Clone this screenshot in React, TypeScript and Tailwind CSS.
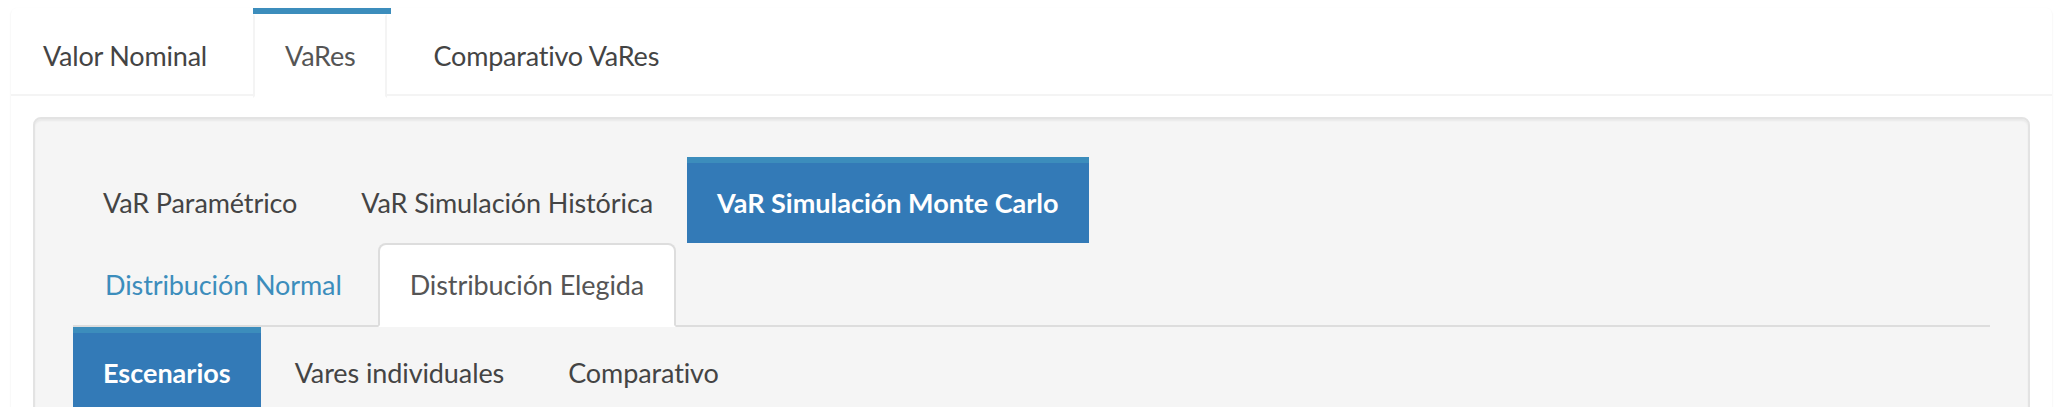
import { useState } from 'react'

// Pestañas de primer nivel del reporte de VaR.
const mainTabs = ['Valor Nominal', 'VaRes', 'Comparativo VaRes']
const methodPills = ['VaR Paramétrico', 'VaR Simulación Histórica', 'VaR Simulación Monte Carlo']
const distTabs = ['Distribución Normal', 'Distribución Elegida']
const resultPills = ['Escenarios', 'Vares individuales', 'Comparativo']

function Pills({ items, active }: { items: string[]; active: number }) {
  return (
    <ul className="flex">
      {items.map((item, index) => (
        <li className={index > 0 ? 'ml-[4px]' : ''} key={item}>
          <a
            className={
              index === active
                ? 'block border-t-[6px] border-[#3c8dbc] bg-[#337ab7] px-[30px] py-[20px] text-[27px] font-bold leading-[40px] tracking-[0px] text-white'
                : 'block border-t-[6px] border-transparent px-[30px] py-[20px] text-[27px] leading-[40px] tracking-[-0.1px] text-[#444]'
            }
          >
            {item}
          </a>
        </li>
      ))}
    </ul>
  )
}

export default function App() {
  const [tab] = useState(1)

  return (
    <div className="h-screen overflow-hidden bg-white pt-[8px] font-['Lato','Liberation_Sans',sans-serif]">
      {/* caja con las pestañas principales */}
      <div className="ml-[11px] mr-[20px] min-h-[500px] rounded-[6px] bg-white shadow-[0_1px_2px_rgba(0,0,0,0.1)]">
        <ul className="flex border-b-2 border-[#f4f4f4]">
          {mainTabs.map((item, index) => (
            <li
              className={
                index === tab
                  ? '-mb-[4px] mr-[10px] border-t-[6px] border-[#3c8dbc]'
                  : '-mb-[4px] mr-[10px] border-t-[6px] border-transparent'
              }
              key={item}
            >
              <a
                className={
                  index === tab
                    ? 'mr-[4px] block border-2 border-x-[#f4f4f4] border-y-transparent bg-white px-[30px] py-[20px] text-[27px] leading-[40px] tracking-[-0.2px] text-[#555]'
                    : 'mr-[4px] block border-2 border-transparent px-[30px] py-[20px] text-[27px] leading-[40px] tracking-[-0.2px] text-[#444]'
                }
              >
                {item}
              </a>
            </li>
          ))}
        </ul>

        {/* contenido de VaRes */}
        <div className="px-[22px] pt-[21px]">
          <div className="min-h-[400px] rounded-[8px] border-2 border-[#e3e3e3] bg-[#f5f5f5] p-[38px] shadow-[inset_0_2px_2px_rgba(0,0,0,0.05)]">
            <Pills items={methodPills} active={2} />

            <ul className="flex border-b-2 border-[#ddd]">
              {distTabs.map((item, index) => (
                <li className="-mb-[2px]" key={item}>
                  <a
                    className={
                      index === 1
                        ? 'mr-[4px] block rounded-t-[8px] border-2 border-[#ddd] border-b-transparent bg-white px-[30px] py-[20px] text-[27px] leading-[40px] tracking-[-0.1px] text-[#555]'
                        : 'mr-[4px] block rounded-t-[8px] border-2 border-transparent px-[30px] py-[20px] text-[27px] leading-[40px] tracking-[-0.1px] text-[#3c8dbc]'
                    }
                  >
                    {item}
                  </a>
                </li>
              ))}
            </ul>

            <Pills items={resultPills} active={0} />
          </div>
        </div>
      </div>
    </div>
  )
}
